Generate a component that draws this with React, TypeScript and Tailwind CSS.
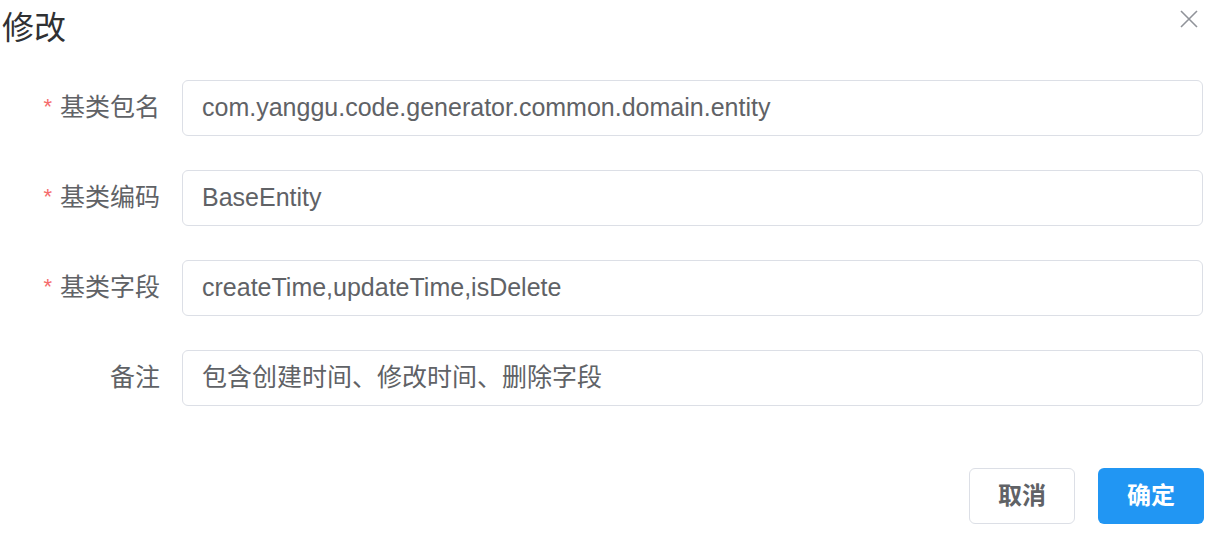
import React from "react";

const font = { fontFamily: '"Liberation Sans", "Noto Sans CJK SC", sans-serif' };

function Row({ label, value, required }: { label: string; value: string; required?: boolean }) {
  return (
    <div className="flex items-center h-[56px]">
      <div className="w-[160px] flex justify-end items-center text-[25px] text-[#606266]">
        {required && <span className="text-[#f56c6c] text-[22px] mr-[8px] relative top-[-2px]">*</span>}
        <span>{label}</span>
      </div>
      <div className="ml-[22px] flex-1 h-[56px] border border-[#dcdfe6] rounded-[6px] flex items-center pl-[19px] text-[25px] text-[#606266]">
        {value}
      </div>
    </div>
  );
}

export default function App() {
  return (
    <div className="w-[1218px] h-[536px] bg-white relative" style={font}>
      <div className="h-[56px] leading-[56px] text-[32px] text-[#303133] pl-[2px]">修改</div>
      <svg className="absolute left-[1180px] top-[10px]" width="18" height="18" viewBox="0 0 18 18">
        <path d="M1 1 L17 17 M17 1 L1 17" stroke="#909399" strokeWidth="1.6" fill="none" />
      </svg>
      <div className="mt-[24px] pr-[15px] flex flex-col gap-[34px]">
        <Row required label="基类包名" value="com.yanggu.code.generator.common.domain.entity" />
        <Row required label="基类编码" value="BaseEntity" />
        <Row required label="基类字段" value="createTime,updateTime,isDelete" />
        <Row label="备注" value="包含创建时间、修改时间、删除字段" />
      </div>
      <div className="mt-[62px] pr-[14px] flex justify-end gap-[23px]">
        <button className="w-[106px] h-[56px] border border-[#dcdfe6] rounded-[6px] bg-white text-[24px] font-semibold text-[#606266]">取消</button>
        <button className="w-[106px] h-[56px] rounded-[6px] bg-[#2196f3] text-[24px] font-semibold text-white">确定</button>
      </div>
    </div>
  );
}
